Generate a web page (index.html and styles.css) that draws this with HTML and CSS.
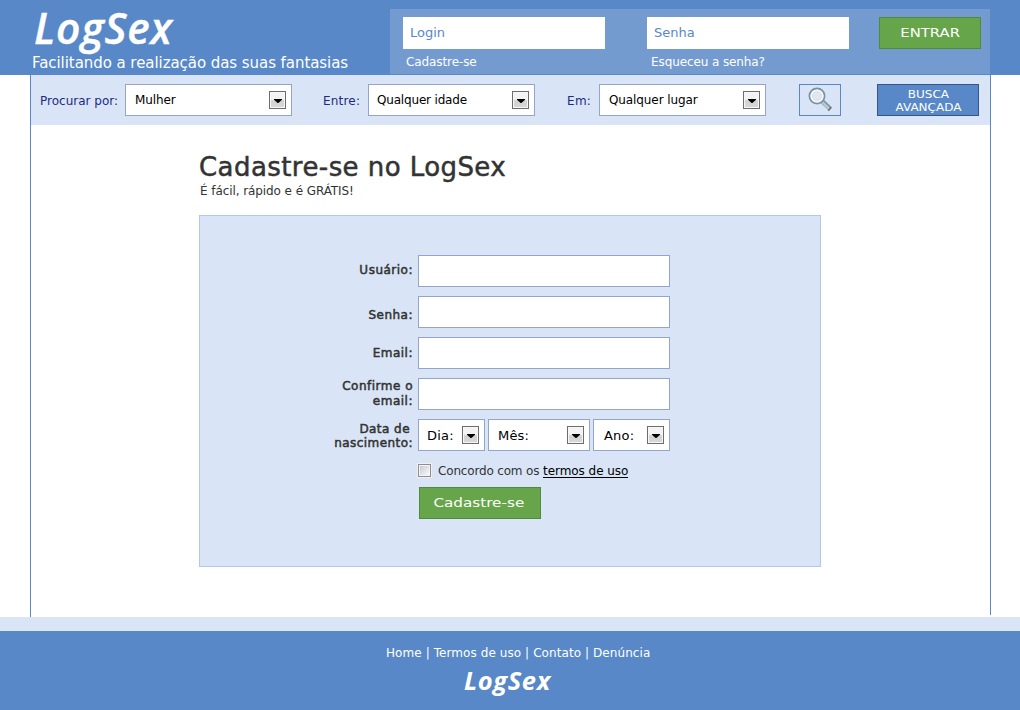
FILE: index.html
```html
<!DOCTYPE html>
<html lang="pt-BR">
<head>
<meta charset="utf-8">
<title>LogSex</title>
<link rel="stylesheet" href="styles.css">
</head>
<body>
<header class="header">
  <div class="brand">
    <div class="logo">LogSex</div>
    <div class="tagline">Facilitando a realização das suas fantasias</div>
  </div>
  <div class="login">
    <div class="login-group"><div class="login-field">Login</div><a class="login-link">Cadastre-se</a></div>
    <div class="login-group"><div class="login-field">Senha</div><a class="login-link forgot">Esqueceu a senha?</a></div>
    <div class="button enter"><span>ENTRAR</span></div>
  </div>
</header>
<div class="page">
  <div class="search">
    <span class="search-label first">Procurar por:</span>
    <div class="select"><span>Mulher</span><i class="arrow"></i></div>
    <span class="search-label second">Entre:</span>
    <div class="select age"><span>Qualquer idade</span><i class="arrow"></i></div>
    <span class="search-label third">Em:</span>
    <div class="select"><span>Qualquer lugar</span><i class="arrow"></i></div>
    <div class="find">
      <svg width="26" height="26" viewBox="0 0 26 26">
        <defs><radialGradient id="lens"><stop offset="0" stop-color="#e4e8ec"/><stop offset=".65" stop-color="#dde5ec"/><stop offset="1" stop-color="#f4f8fc"/></radialGradient></defs>
        <path d="M14.300 14.300l7.700 7.400" stroke="#8195a4" stroke-width="4.600"/>
        <path d="M14 14.800l7.200 7" stroke="#b9c9d5" stroke-width="2.400"/>
        <path d="M20.200 23.600l3.200-3.400" stroke="#66747f" stroke-width="1.600"/>
        <circle cx="9" cy="9" r="7.500" fill="url(#lens)" stroke="#7893a9" stroke-width="2"/>
        <circle cx="9" cy="9" r="5.900" fill="none" stroke="#f7fafd" stroke-width="1.400"/>
      </svg>
    </div>
    <div class="advanced"><span>BUSCA<br>AVANÇADA</span></div>
  </div>
  <main class="main">
    <h1 class="title">Cadastre-se no LogSex</h1>
    <p class="subtitle">É fácil, rápido e é GRÁTIS!</p>
    <div class="card">
      <div class="row"><div class="label user">Usuário:</div><div class="input"></div></div>
      <div class="row"><div class="label pass">Senha:</div><div class="input"></div></div>
      <div class="row"><div class="label mail">Email:</div><div class="input"></div></div>
      <div class="row"><div class="label confirm">Confirme o<br>email:</div><div class="input"></div></div>
      <div class="row"><div class="label birth"><span class="birth-top">Data de</span>nascimento:</div>
        <div class="dates">
          <div class="select day"><span>Dia:</span><i class="arrow"></i></div>
          <div class="select month"><span>Mês:</span><i class="arrow"></i></div>
          <div class="select year"><span>Ano:</span><i class="arrow"></i></div>
        </div>
      </div>
      <div class="terms"><i class="check"></i><span class="agree">Concordo com os</span><a class="terms-link">termos de uso</a></div>
      <div class="button register"><span>Cadastre-se</span></div>
    </div>
  </main>
</div>
<footer class="footer">
  <nav class="footer-nav">Home | Termos de uso | Contato | Denúncia</nav>
  <div class="footer-logo">LogSex</div>
</footer>
</body>
</html>
```
FILE: styles.css
```css
* { box-sizing: border-box; }
body { margin: 0; width: 1020px; height: 710px; overflow: hidden; background: #fff; font-family: "DejaVu Sans", sans-serif; font-size: 12px; color: #333; white-space: nowrap; }
.header { display: flex; height: 75px; background: #5888c7; color: #fff; }
.brand { width: 390px; padding-left: 32px; }
.logo { font: italic 600 42.5px/55px "Open Sans", sans-serif; height: 53px; padding-left: 2px; letter-spacing: .8px; -webkit-text-stroke: .4px #fff; }
.tagline { font-size: 15px; line-height: 20px; letter-spacing: -.06px; }
.login { display: flex; width: 600px; height: 65px; margin-top: 9px; padding: 8px 0 0 13px; background: #749bcf; }
.login-group { width: 202px; margin-right: 42px; }
.login-group:nth-child(2) { margin-right: 30px; }
.login-field { height: 32px; padding-left: 7px; background: #fff; color: #5888c7; font-size: 13px; line-height: 32px; }
.login-link { display: block; padding-left: 3px; line-height: 26px; letter-spacing: -.1px; }
.forgot { padding-left: 4px; }
.button { height: 32px; background: #66a54a; border: 1px solid #4f8a3d; color: #fff; text-align: center; line-height: 29px; }
.button span { display: inline-block; transform: scaleX(1.14); }
.enter { width: 102px; font-size: 13px; }
.page { width: 961px; height: 542px; margin-left: 30px; border-left: 1px solid #5888c7; background: linear-gradient(#5888c7, #5888c7) 100% 0 / 1px 540px no-repeat; }
.search { display: flex; width: 959px; height: 50px; padding: 9px 0 0 9px; background: #d9e5f6; }
.search-label { color: #1d2b83; line-height: 34px; letter-spacing: 0; }
.first { width: 85px; }
.second { width: 76px; padding-left: 31px; letter-spacing: .2px; }
.third { width: 64px; padding-left: 32px; letter-spacing: .3px; }
.select { display: flex; justify-content: space-between; width: 167px; height: 32px; padding: 6px 5px 0 9px; background: #fff; border: 1px solid #94a5cb; color: #000; }
.select span { line-height: 19px; letter-spacing: -.1px; }
.age { padding-left: 8px; }
.age span { letter-spacing: -.18px; }
.arrow { position: relative; width: 17px; height: 18px; border: 1px solid #6d6d6d; box-shadow: inset 0 0 0 1px #f7f7f7; background: linear-gradient(#f3f3f3 45%, #d2d2d2 55%, #d8d8d8); }
.arrow::after { content: ""; position: absolute; left: 4px; top: 7px; width: 8px; height: 4px; background: #000; clip-path: polygon(0 0, 100% 0, 100% 20%, 55% 100%, 45% 100%, 0 20%); }
.find { width: 42px; height: 32px; margin-left: 33px; padding: 2px 0 0 8px; border: 1px solid #5888c7; }
.find svg { display: block; }
.advanced { width: 102px; height: 32px; margin-left: 36px; padding-top: 3px; background: #5888c7; border: 1px solid #34568a; color: #fff; text-align: center; font-size: 10px; line-height: 13px; }
.advanced span { display: inline-block; transform: scaleX(1.2); }
.main { padding: 26px 0 0 168px; }
.title { margin: 0; height: 32px; font-size: 26px; line-height: 33px; font-weight: 400; letter-spacing: .43px; -webkit-text-stroke: .5px #333; }
.subtitle { margin: 0; height: 32px; padding-left: 1px; line-height: 16px; letter-spacing: -.08px; }
.card { width: 622px; height: 352px; padding-top: 39px; background: #d9e5f6; border: 1px solid #b0c8ea; }
.row { display: flex; height: 41px; }
.label { width: 213px; margin-right: 5px; text-align: right; line-height: 15px; letter-spacing: .5px; -webkit-text-stroke: .5px #333; }
.user { padding-top: 8px; }
.pass { padding-top: 12px; }
.mail { padding-top: 9px; }
.confirm { padding-top: 1px; }
.birth { padding-top: 3px; line-height: 15px; letter-spacing: .45px; }
.birth-top { display: block; height: 14px; padding-right: 3px; }
.input { width: 252px; height: 32px; background: #fff; border: 1px solid #94a5cb; }
.dates { display: flex; gap: 3px; }
.dates .select { padding-left: 8px; }
.dates .select span { font-size: 13px; letter-spacing: .2px; }
.day { width: 67px; }
.month { width: 102px; }
.dates .month { padding-left: 9px; }
.year { width: 77px; }
.dates .year { padding-left: 10px; }
.terms { display: flex; height: 27px; padding-left: 218px; }
.check { width: 13px; height: 13px; margin: 4px 7px 0 0; background: linear-gradient(135deg, #bfc5d3, #fff); border: 1px solid #8e8f8f; box-shadow: inset 0 0 0 1px #f4f4f4, 0 0 0 1px #f0f0ec; }
.agree { width: 105px; line-height: 22px; letter-spacing: -.17px; }
.terms-link { height: 18px; line-height: 22px; border-bottom: 1px solid #000; color: #000; letter-spacing: -.05px; }
.register { width: 122px; margin-left: 219px; padding-right: 2px; font-size: 13px; }
.register span { transform: scaleX(1.17); }
.footer { height: 93px; padding-top: 13px; border-top: 14px solid #d9e5f6; background: #5888c7; color: #fff; }
.footer-nav { padding-left: 386px; line-height: 18px; letter-spacing: .08px; }
.footer-logo { padding-left: 464px; font: italic 700 25.5px/36px "Open Sans", sans-serif; letter-spacing: .6px; }
```
